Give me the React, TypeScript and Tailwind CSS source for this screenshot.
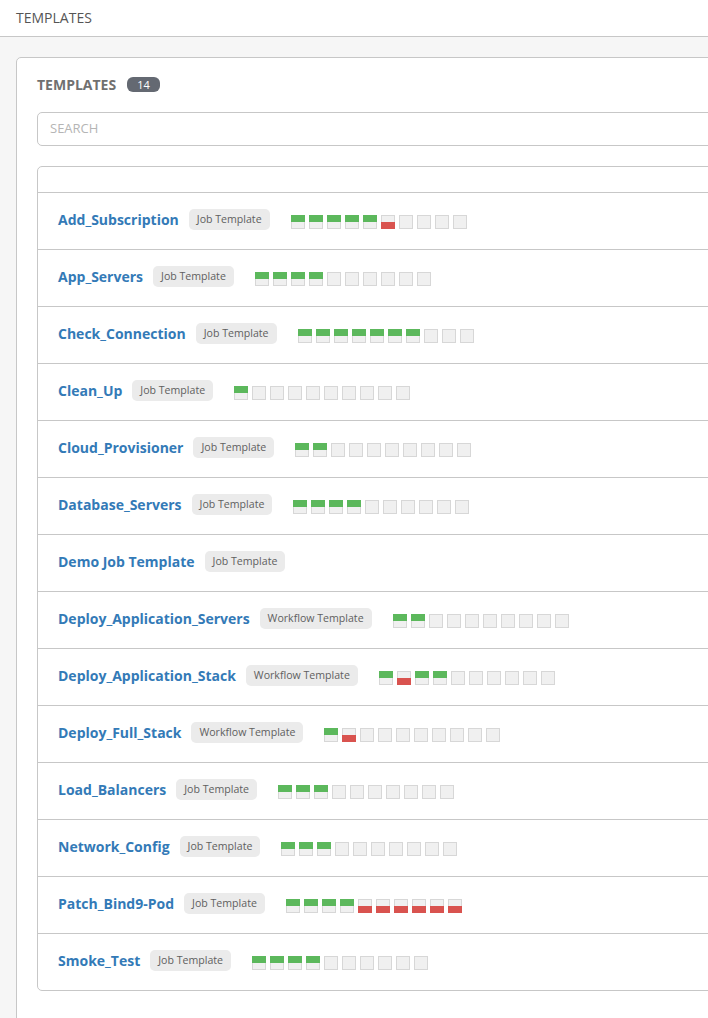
type Job = "G" | "R" | "E";

const templates: { name: string; kind: string; jobs: string }[] = [
    { name: "Add_Subscription", kind: "Job Template", jobs: "GGGGGREEEE" },
    { name: "App_Servers", kind: "Job Template", jobs: "GGGGEEEEEE" },
    { name: "Check_Connection", kind: "Job Template", jobs: "GGGGGGGEEE" },
    { name: "Clean_Up", kind: "Job Template", jobs: "GEEEEEEEEE" },
    { name: "Cloud_Provisioner", kind: "Job Template", jobs: "GGEEEEEEEE" },
    { name: "Database_Servers", kind: "Job Template", jobs: "GGGGEEEEEE" },
    { name: "Demo Job Template", kind: "Job Template", jobs: "" },
    { name: "Deploy_Application_Servers", kind: "Workflow Template", jobs: "GGEEEEEEEE" },
    { name: "Deploy_Application_Stack", kind: "Workflow Template", jobs: "GRGGEEEEEE" },
    { name: "Deploy_Full_Stack", kind: "Workflow Template", jobs: "GREEEEEEEE" },
    { name: "Load_Balancers", kind: "Job Template", jobs: "GGGEEEEEEE" },
    { name: "Network_Config", kind: "Job Template", jobs: "GGGEEEEEEE" },
    { name: "Patch_Bind9-Pod", kind: "Job Template", jobs: "GGGGRRRRRR" },
    { name: "Smoke_Test", kind: "Job Template", jobs: "GGGGEEEEEE" },
];

function JobBox({ status }: { status: Job }) {
    return (
        <div className="w-[14px] h-[14px] flex flex-col">
            {status === "G" ? (
                <div className="h-[7px] bg-[#5cb85c]" />
            ) : (
                <div className="h-[7px] bg-[#f0f0f0] border border-b-0 border-[#d7d7d7]" />
            )}
            {status === "R" ? (
                <div className="h-[7px] bg-[#d9534f]" />
            ) : (
                <div className="h-[7px] bg-[#f0f0f0] border border-t-0 border-[#d7d7d7]" />
            )}
        </div>
    );
}

export default function App() {
    return (
        <div
            className="w-[708px] h-[1018px] overflow-hidden bg-[#f6f6f6]"
            style={{ fontFamily: '"Open Sans", sans-serif' }}
        >
            <div className="h-[37px] bg-white border-b border-[#c7c7c7] px-4 flex items-center">
                <span className="text-[14px] text-[#555555] pb-[1px]">TEMPLATES</span>
            </div>

            <div className="ml-4 -mr-10 mt-5 bg-white border border-[#c7c7c7] rounded-[5px] px-5 pt-[16px] pb-10">
                <div className="flex items-center gap-[11px] h-[20px]">
                    <span className="text-[14px] font-bold text-[#707070]">TEMPLATES</span>
                    <span className="bg-[#646972] text-white text-[11px] leading-none rounded-[6px] px-[10px] py-[2px]">14</span>
                </div>

                <div className="mt-[18px] h-[34px] border border-[#c7c7c7] rounded-[5px] flex items-center pl-3">
                    <span className="text-[13px] text-[#b5b5b5]">SEARCH</span>
                </div>

                <div className="mt-[20px] border border-[#c7c7c7] rounded-[5px]">
                    <div className="h-[25px]" />
                    {templates.map((t) => (
                        <div key={t.name} className="h-[57px] border-t border-[#c7c7c7] flex items-center pl-5">
                            <span className="text-[14px] font-bold text-[#337ab7] mb-[4px]">{t.name}</span>
                            <span className="ml-[10px] mb-[3px] bg-[#ebebeb] text-[#606060] text-[10.6px] rounded-[5px] h-[21px] px-[8px] flex items-center">
                                {t.kind}
                            </span>
                            <div className="ml-[21px] flex gap-[4px] mt-[1px]">
                                {t.jobs.split("").map((s, i) => (
                                    <JobBox key={i} status={s as Job} />
                                ))}
                            </div>
                        </div>
                    ))}
                </div>
            </div>
        </div>
    );
}
